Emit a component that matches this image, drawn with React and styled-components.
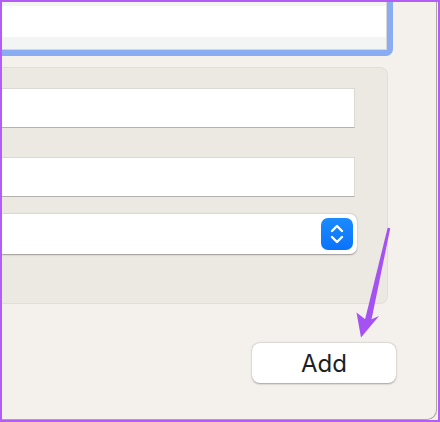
import React from 'react'
import styled, { createGlobalStyle } from 'styled-components'

const Global = createGlobalStyle`
  html, body { margin: 0; padding: 0; background: #f4f0ec; }
  body { font-family: Inter, "Liberation Sans", sans-serif; }
`

const Frame = styled.div`
  position: relative;
  box-sizing: border-box;
  width: 440px;
  height: 422px;
  border: 2px solid #b35cf6;
  overflow: hidden;
  background: #f4f0ec;
`

const Window = styled.div`
  box-sizing: border-box;
  width: 435px;
  height: 418px;
  background: #f4f0ec;
  border-right: 1px solid #a9a5a1;
  border-bottom: 1px solid #a9a5a1;
  border-bottom-right-radius: 10px;
  display: flex;
  flex-direction: column;
`

const FocusField = styled.div`
  width: 391px;
  box-sizing: border-box;
  border-right: 6px solid #8aacf2;
  border-bottom: 6px solid #8aacf2;
  border-bottom-right-radius: 7px;
`

const FieldChrome = styled.div`
  background: #f3f4f4;
  border-right: 1px solid #d6d6d6;
  border-bottom: 1px solid #d6d6d6;
  padding: 4px 0 12px;
`

const FieldBody = styled.div`
  background: #ffffff;
  height: 31px;
`

const Group = styled.div`
  margin-top: 11px;
  box-sizing: border-box;
  width: 386px;
  height: 237px;
  background: #ece8e2;
  border-right: 1px solid #e2ddd7;
  border-top: 1px solid #e2ddd7;
  border-bottom: 1px solid #e2ddd7;
  border-top-right-radius: 8px;
  border-bottom-right-radius: 8px;
  padding: 20px 32px 0 0;
  display: flex;
  flex-direction: column;
`

const TextInput = styled.div`
  height: 38px;
  background: #ffffff;
  border-top: 1px solid #dcd8d4;
  border-right: 1px solid #dcd8d4;
  border-bottom: 1px solid #b4b1ae;
  margin-bottom: ${p => p.$gap}px;
`

const Popup = styled.div`
  height: 40px;
  margin-right: -2px;
  background: #ffffff;
  border-radius: 0 7px 7px 0;
  box-shadow: 0 0.5px 1.5px rgba(0, 0, 0, 0.35);
  display: flex;
  justify-content: flex-end;
  align-items: center;
  padding-right: 4px;
`

const Stepper = styled.div`
  width: 32px;
  height: 32px;
  border-radius: 7px;
  background: linear-gradient(#1b8bff, #0a73fa);
  display: flex;
  align-items: center;
  justify-content: center;
`

const Footer = styled.div`
  display: flex;
  justify-content: flex-end;
  padding: 39px 40px 0 0;
`

const Button = styled.button`
  width: 144px;
  height: 40px;
  border: none;
  border-radius: 8px;
  background: #ffffff;
  box-shadow: 0 0.5px 2px rgba(0, 0, 0, 0.35);
  font-family: Inter, "Liberation Sans", sans-serif;
  font-size: 24px;
  color: #1f1f1f;
  padding: 0;
`

const Arrow = styled.svg`
  position: absolute;
  left: -2px;
  top: -2px;
  pointer-events: none;
`

const Chevrons = () => (
  <svg width="18" height="26" viewBox="0 0 18 26">
    <path d="M4 10 L9 5 L14 10 M4 16 L9 21 L14 16" fill="none" stroke="#fff" strokeWidth="2.4" strokeLinecap="round" strokeLinejoin="round" />
  </svg>
)

export default function App() {
  return (
    <Frame>
      <Global />
      <Window>
        <FocusField>
          <FieldChrome>
            <FieldBody />
          </FieldChrome>
        </FocusField>
        <Group>
          <TextInput $gap={29} />
          <TextInput $gap={17} />
          <Popup>
            <Stepper><Chevrons /></Stepper>
          </Popup>
        </Group>
        <Footer>
          <Button>Add</Button>
        </Footer>
      </Window>
      <Arrow width="440" height="422" viewBox="0 0 440 422">
        <path d="M387.6 228 Q388.8 227.2 390.2 228.6 L371 322 L364.8 320.5 Z" fill="#a452f2" />
        <path d="M361 337.5 L356.5 312.5 L367.5 321 L379 316 Z" fill="#a452f2" />
      </Arrow>
    </Frame>
  )
}
